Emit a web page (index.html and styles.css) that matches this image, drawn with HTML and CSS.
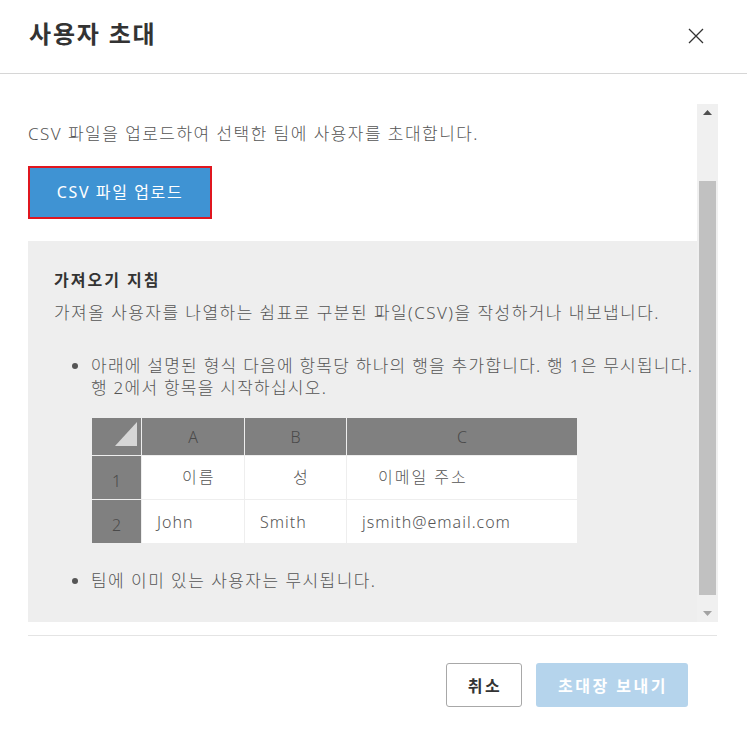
FILE: index.html
```html
<!DOCTYPE html>
<html lang="ko">
<head>
<meta charset="utf-8">
<title>사용자 초대</title>
<link rel="stylesheet" href="styles.css">
</head>
<body>
<div class="dialog">
  <header class="hdr">
    <h1 class="title">사용자 초대</h1>
    <button class="close" aria-label="닫기">
      <svg width="16" height="16" viewBox="0 0 16 16"><path d="M1 1 L15 15 M15 1 L1 15" stroke="#333" stroke-width="1.3" fill="none"/></svg>
    </button>
  </header>
  <div class="body">
    <div class="scroll">
      <p class="intro">CSV 파일을 업로드하여 선택한 팀에 사용자를 초대합니다.</p>
      <button class="upload">CSV 파일 업로드</button>
      <div class="guide">
        <h2 class="guide-title">가져오기 지침</h2>
        <p class="guide-text">가져올 사용자를 나열하는 쉼표로 구분된 파일(CSV)을 작성하거나 내보냅니다.</p>
        <ul class="list">
          <li>아래에 설명된 형식 다음에 항목당 하나의 행을 추가합니다. 행 1은 무시됩니다.<br>행 2에서 항목을 시작하십시오.</li>
        </ul>
        <table class="sheet">
          <tr class="head">
            <td class="corner"><div class="corner-in"><svg width="22" height="24" viewBox="0 0 22 24"><polygon points="0,24 22,24 22,0" fill="#d6d6d6"/></svg></div></td>
            <td class="col-a">A</td>
            <td class="col-b">B</td>
            <td class="col-c">C</td>
          </tr>
          <tr class="r1">
            <td class="num">1</td>
            <td class="lab lab-a">이름</td>
            <td class="lab lab-b">성</td>
            <td class="lab lab-c">이메일 주소</td>
          </tr>
          <tr class="r2">
            <td class="num">2</td>
            <td class="val">John</td>
            <td class="val">Smith</td>
            <td class="val">jsmith@email.com</td>
          </tr>
        </table>
        <ul class="list list-last">
          <li>팀에 이미 있는 사용자는 무시됩니다.</li>
        </ul>
      </div>
    </div>
    <div class="scrollbar">
      <div class="sb-btn"><svg width="9" height="5" viewBox="0 0 9 5"><polygon points="0,5 9,5 4.5,0" fill="#505050"/></svg></div>
      <div class="sb-track"><div class="sb-thumb"></div></div>
      <div class="sb-btn sb-down"><svg width="9" height="5" viewBox="0 0 9 5"><polygon points="0,0 9,0 4.5,5" fill="#a3a3a3"/></svg></div>
    </div>
  </div>
  <div class="sep"></div>
  <footer class="foot">
    <button class="btn btn-cancel">취소</button>
    <button class="btn btn-send">초대장 보내기</button>
  </footer>
</div>
</body>
</html>
```
FILE: styles.css
```css
* { box-sizing: border-box; }
html, body { margin: 0; padding: 0; background: #fff; }
body {
  font-family: "Noto Sans", "Noto Sans CJK KR", sans-serif;
  font-weight: 300;
  color: #555;
  width: 747px;
  height: 741px;
  overflow: hidden;
  letter-spacing: 2px;
}
.dialog { display: flex; flex-direction: column; height: 741px; }

.hdr {
  height: 74px;
  border-bottom: 1px solid #d6d6d6;
  display: flex;
  align-items: center;
  justify-content: space-between;
  padding: 0 43px 0 29px;
}
.title {
  margin: 0;
  font-size: 24px;
  font-weight: 700;
  color: #333;
  line-height: 30px;
  letter-spacing: 1.8px;
  position: relative;
  top: -3px;
}
.close {
  border: 0;
  background: none;
  padding: 0;
  width: 16px;
  height: 16px;
  display: flex;
  position: relative;
  top: -1px;
}

.body {
  margin-top: 30px;
  height: 518px;
  display: flex;
  padding: 0 29px 0 28px;
}
.scroll {
  flex: 1;
  overflow: hidden;
}
.intro {
  margin: 18px 0 0;
  font-size: 17px;
  line-height: 24px;
  letter-spacing: 1.45px;
}
.upload {
  display: block;
  margin-top: 20px;
  width: 184px;
  height: 53px;
  background: #3f93d3;
  border: 2px solid #e0161f;
  color: #fff;
  font-family: inherit;
  font-weight: 400;
  font-size: 16px;
  letter-spacing: 1.6px;
  padding: 0 0 3px;
}
.guide {
  margin-top: 22px;
  background: #eeeeee;
  padding: 26px 0 80px 26px;
}
.guide-title {
  margin: 0;
  font-size: 16px;
  font-weight: 700;
  color: #333;
  line-height: 26px;
}
.guide-text {
  margin: 8px 0 0;
  font-size: 17px;
  line-height: 24px;
  letter-spacing: 1.45px;
}
.list {
  margin: 30px 0 0;
  padding-left: 37px;
  font-size: 17px;
  line-height: 22px;
  letter-spacing: 1.25px;
  white-space: nowrap;
}
.sheet {
  margin: 18px 0 0 37px;
  border-collapse: separate;
  border-spacing: 1px;
  font-size: 16px;
  letter-spacing: 2px;
}
.sheet td { padding: 0; }
.head td { height: 37px; background: #808080; color: #4a4a4a; text-align: center; letter-spacing: 0; }
.corner { width: 49px; }
.corner-in { display: flex; justify-content: flex-end; align-items: flex-end; height: 37px; padding: 0 4px 9px 0; }
.col-a { width: 102px; }
.col-b { width: 101px; }
.col-c { width: 230px; }
.r1 td { height: 43px; background: #fff; }
.r2 td { height: 43px; background: #fff; }
.num { background: #808080 !important; color: #4a4a4a; text-align: center; vertical-align: middle; padding-top: 6px !important; letter-spacing: 0; }
.lab { vertical-align: middle; padding-bottom: 4px !important; }
.lab-a { padding-left: 40px !important; }
.lab-b { padding-left: 48px !important; }
.lab-c { padding-left: 31px !important; }
.val { padding-left: 15px !important; letter-spacing: 1px; }
.list-last { margin-top: 26px; letter-spacing: 1.45px; }

.scrollbar {
  width: 21px;
  background: #f0f0f0;
  display: flex;
  flex-direction: column;
  padding: 0 2px;
}
.sb-btn { height: 17px; display: flex; align-items: center; justify-content: center; }
.sb-track { flex: 1; padding-top: 60px; padding-bottom: 10px; display: flex; flex-direction: column; }
.sb-thumb { flex: 1; background: #c1c1c1; }

.sep {
  margin: 13px 30px 0 28px;
  height: 1px;
  background: #cfcfcf;
  border-bottom: 1px solid #e4e4e4;
}
.foot {
  display: flex;
  justify-content: flex-end;
  gap: 14px;
  padding: 27px 59px 0 0;
}
.btn {
  height: 44px;
  font-family: inherit;
  font-size: 16px;
  font-weight: 700;
  border-radius: 3px;
  letter-spacing: 2.5px;
  padding: 0 0 0 2px;
}
.btn-cancel {
  width: 76px;
  background: #fff;
  border: 1px solid #a8a8a8;
  color: #333;
}
.btn-send {
  width: 152px;
  background: #b5d4ec;
  border: 0;
  color: #fff;
}
```
